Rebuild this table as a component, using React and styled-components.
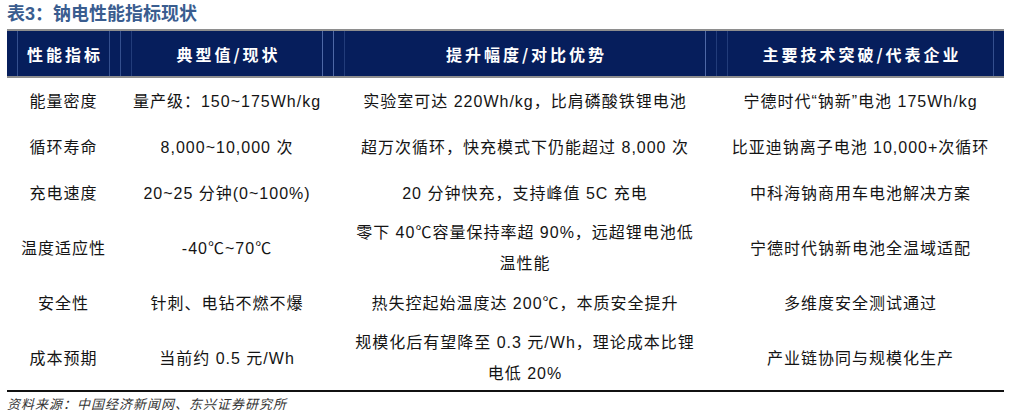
import React from "react";
import styled, { createGlobalStyle } from "styled-components";

const Global = createGlobalStyle`
  html, body { margin: 0; padding: 0; background: #fff; }
  body { font-family: "Liberation Sans", "Noto Sans CJK SC", sans-serif; }
`;

const COLS = "10px 92px 11px 11px 191px 11px 11px 361px 11px 11px 266px 11px";

const Page = styled.div`
  width: 1010px;
  height: 418px;
  padding-left: 7px;
  box-sizing: border-box;
  overflow: hidden;
`;

const Title = styled.div`
  height: 29px;
  line-height: 28px;
  font-size: 18px;
  font-weight: 700;
  color: #3a5d8f;
  white-space: nowrap;
`;

const Table = styled.div`
  width: 997px;
`;

const HeaderRow = styled.div`
  display: grid;
  grid-template-columns: ${COLS};
  height: 49px;
  box-sizing: border-box;
  background: #061e5c;
  border-top: 2px solid #8e8e8e;
  border-bottom: 2px solid #8e8e8e;
`;

const toneColor = { bright: "#4e68a6", mid: "#344f8e", faint: "#223c7a", none: "transparent" };

const HeadCell = styled.div`
  border-left: 1px solid ${(p) => toneColor[p.$tone || "none"]};
  display: flex;
  align-items: center;
  justify-content: center;
  color: #fff;
  font-family: "Noto Sans CJK SC", "Liberation Sans", sans-serif;
  font-weight: 700;
  font-size: 16px;
  letter-spacing: 3px;
  white-space: nowrap;
  padding-left: 3px;
`;

const BodyRow = styled.div`
  display: grid;
  grid-template-columns: ${COLS};
  min-height: ${(p) => (p.$tall ? 64 : 46)}px;
  box-sizing: border-box;
  padding: 1px 0;
  align-items: center;
`;

const Cell = styled.div`
  grid-column: ${(p) => p.$col};
  text-align: center;
  font-size: 16px;
  letter-spacing: 1px;
  line-height: 31px;
  color: #141414;
  white-space: nowrap;
  padding-left: 1px;
`;

const BottomRule = styled.div`
  height: 2px;
  background: #111;
`;

const Source = styled.div`
  font-size: 13px;
  font-style: italic;
  letter-spacing: 1px;
  color: #333;
  line-height: 26px;
  white-space: nowrap;
`;

const rows = [
  ["能量密度", "量产级：150~175Wh/kg", ["实验室可达 220Wh/kg，比肩磷酸铁锂电池"], "宁德时代“钠新”电池 175Wh/kg"],
  ["循环寿命", "8,000~10,000 次", ["超万次循环，快充模式下仍能超过 8,000 次"], "比亚迪钠离子电池 10,000+次循环"],
  ["充电速度", "20~25 分钟(0~100%)", ["20 分钟快充，支持峰值 5C 充电"], "中科海钠商用车电池解决方案"],
  ["温度适应性", "-40℃~70℃", ["零下 40℃容量保持率超 90%，远超锂电池低", "温性能"], "宁德时代钠新电池全温域适配"],
  ["安全性", "针刺、电钻不燃不爆", ["热失控起始温度达 200℃，本质安全提升"], "多维度安全测试通过"],
  ["成本预期", "当前约 0.5 元/Wh", ["规模化后有望降至 0.3 元/Wh，理论成本比锂", "电低 20%"], "产业链协同与规模化生产"],
];

export default function App() {
  return (
    <Page>
      <Global />
      <Title>表3：钠电性能指标现状</Title>
      <Table>
        <HeaderRow>
          <HeadCell />
          <HeadCell $tone="mid">性能指标</HeadCell>
          <HeadCell $tone="mid" />
          <HeadCell $tone="mid" />
          <HeadCell $tone="faint">典型值/现状</HeadCell>
          <HeadCell $tone="bright" />
          <HeadCell $tone="bright" />
          <HeadCell $tone="faint">提升幅度/对比优势</HeadCell>
          <HeadCell $tone="bright" />
          <HeadCell $tone="faint" />
          <HeadCell $tone="faint">主要技术突破/代表企业</HeadCell>
          <HeadCell $tone="mid" />
        </HeaderRow>
        {rows.map((r, i) => (
          <BodyRow key={i} $tall={r[2].length > 1}>
            <Cell $col={2}>{r[0]}</Cell>
            <Cell $col={5}>{r[1]}</Cell>
            <Cell $col={8}>
              {r[2].map((line, j) => (
                <React.Fragment key={j}>
                  {j > 0 && <br />}
                  {line}
                </React.Fragment>
              ))}
            </Cell>
            <Cell $col={11}>{r[3]}</Cell>
          </BodyRow>
        ))}
        <BottomRule />
      </Table>
      <Source>资料来源：中国经济新闻网、东兴证券研究所</Source>
    </Page>
  );
}
